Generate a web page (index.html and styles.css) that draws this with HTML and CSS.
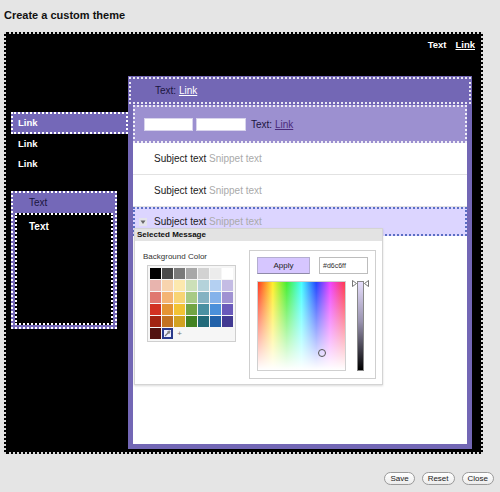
FILE: index.html
```html
<!DOCTYPE html>
<html>
<head>
<meta charset="utf-8">
<link rel="stylesheet" href="styles.css">
</head>
<body>
<div class="title">Create a custom theme</div>
<div class="canvas">
  <div class="topbar"><span>Text</span><a class="tlink">Link</a></div>
  <div class="main">
    <div class="nav">
      <div class="nav-item selected">Link</div>
      <div class="nav-item">Link</div>
      <div class="nav-item">Link</div>
      <div class="box">
        <div class="box-head">Text</div>
        <div class="box-body">Text</div>
      </div>
    </div>
    <div class="panel">
      <div class="phead">Text: <a class="hlink">Link</a></div>
      <div class="ptool"><span class="input"></span><span class="input wide"></span><span class="ptext">Text: <a class="plink">Link</a></span></div>
      <div class="list">
        <div class="row first"><span class="subj">Subject text</span>&nbsp;<span class="snip">Snippet text</span></div>
        <div class="row"><span class="subj">Subject text</span>&nbsp;<span class="snip">Snippet text</span></div>
        <div class="row selected">
          <svg class="drop" width="8" height="8" viewBox="0 0 8 8"><rect x="0" y="0" width="8" height="8" fill="#e4e4ea"/><path d="M1.5 2.5 L6.5 2.5 L4 6 Z" fill="#666"/></svg>
          <span class="subj">Subject text</span>&nbsp;<span class="snip">Snippet text</span>
        </div>
        <div class="popup">
          <div class="popup-head">Selected Message</div>
          <div class="popup-body">
            <div class="leftcol">
              <div class="label">Background Color</div>
              <div class="grid">
                <span class="sw" style="background:#000000"></span>
                <span class="sw" style="background:#4a4a4a"></span>
                <span class="sw" style="background:#7a7a7a"></span>
                <span class="sw" style="background:#a8a8a8"></span>
                <span class="sw" style="background:#d2d2d2"></span>
                <span class="sw" style="background:#ececec"></span>
                <span class="sw" style="background:#ffffff"></span>

                <span class="sw" style="background:#e8b4ae"></span>
                <span class="sw" style="background:#f8d4ae"></span>
                <span class="sw" style="background:#fce8ae"></span>
                <span class="sw" style="background:#cce0b8"></span>
                <span class="sw" style="background:#b4d2da"></span>
                <span class="sw" style="background:#b4d0f2"></span>
                <span class="sw" style="background:#c4bce4"></span>

                <span class="sw" style="background:#e07870"></span>
                <span class="sw" style="background:#f4b474"></span>
                <span class="sw" style="background:#f8d474"></span>
                <span class="sw" style="background:#a8ca84"></span>
                <span class="sw" style="background:#84b2c2"></span>
                <span class="sw" style="background:#84b2ea"></span>
                <span class="sw" style="background:#a092d2"></span>

                <span class="sw" style="background:#d23222"></span>
                <span class="sw" style="background:#e49434"></span>
                <span class="sw" style="background:#f2c234"></span>
                <span class="sw" style="background:#72a444"></span>
                <span class="sw" style="background:#4a90a2"></span>
                <span class="sw" style="background:#4a90da"></span>
                <span class="sw" style="background:#6a5aba"></span>

                <span class="sw" style="background:#a22412"></span>
                <span class="sw" style="background:#c27222"></span>
                <span class="sw" style="background:#d2a222"></span>
                <span class="sw" style="background:#428222"></span>
                <span class="sw" style="background:#226a7a"></span>
                <span class="sw" style="background:#2262aa"></span>
                <span class="sw" style="background:#423a92"></span>

                <span class="sw" style="background:#521210"></span>
                <span class="sw picked"><svg width="7" height="7" viewBox="0 0 7 7"><path d="M1 6 L4.5 2.5 M3.5 1.5 L5.5 3.5" stroke="#777" stroke-width="1.2" fill="none"/><circle cx="5.2" cy="1.8" r="1.2" fill="#888"/></svg></span>
                <span class="sw plus">+</span>
              </div>
            </div>
            <div class="picker">
              <div class="prow">
                <div class="apply">Apply</div>
                <div class="hex">#d6c6ff</div>
              </div>
              <div class="prow2">
                <div class="spectrum"><span class="marker"></span></div>
                <div class="slider">
                  <svg class="arrows" width="17" height="8" viewBox="0 0 17 8"><path d="M0.5 0.5 L4.5 3.5 L0.5 6.5 Z" fill="#fff" stroke="#555" stroke-width="0.8"/><path d="M16.5 0.5 L12.5 3.5 L16.5 6.5 Z" fill="#fff" stroke="#555" stroke-width="0.8"/></svg>
                </div>
              </div>
            </div>
          </div>
        </div>
      </div>
    </div>
  </div>
</div>
<div class="buttons">
  <span class="btn">Save</span>
  <span class="btn">Reset</span>
  <span class="btn">Close</span>
</div>
</body>
</html>
```

FILE: styles.css
```css
html, body {
  margin: 0;
  padding: 0;
}
body {
  background: #e5e5e5;
  font-family: "Liberation Sans", Arial, sans-serif;
  width: 500px;
  height: 492px;
  overflow: hidden;
}
.title {
  padding: 8px 0 0 4px;
  font-size: 11px;
  line-height: 14px;
  font-weight: bold;
  color: #111;
}
.canvas {
  margin: 10px 0 0 4px;
  width: 479px;
  height: 422px;
  box-sizing: border-box;
  border: 2px dotted #d8d8d8;
  background: #000;
  padding: 0 0 3px 5px;
  display: flex;
  flex-direction: column;
}
.topbar {
  height: 42px;
  box-sizing: border-box;
  display: flex;
  justify-content: flex-end;
  gap: 9px;
  padding: 5px 6px 0 0;
  font-size: 9.5px;
  line-height: 12px;
  font-weight: bold;
  color: #fff;
}
.tlink {
  text-decoration: underline;
}
.main {
  flex: 1;
  display: flex;
  margin-right: 9px;
}
.nav {
  width: 117px;
  padding-top: 36px;
  flex-shrink: 0;
  display: flex;
  flex-direction: column;
}
.nav-item {
  height: 20px;
  line-height: 20px;
  padding-left: 7px;
  font-size: 9.5px;
  font-weight: bold;
  color: #fff;
}
.nav-item.selected {
  height: 22px;
  line-height: 18px;
  box-sizing: border-box;
  border: 2px dotted #fff;
  background: #7468b8;
  padding-left: 5px;
}
.box {
  margin-top: 17px;
  width: 106px;
  height: 138px;
  box-sizing: border-box;
  border: 2px dotted #fff;
  background: #7468b8;
  padding: 0 2px 2px 2px;
  display: flex;
  flex-direction: column;
}
.box-head {
  height: 20px;
  line-height: 20px;
  padding-left: 14px;
  font-size: 10px;
  color: #1b1640;
}
.box-body {
  flex: 1;
  background: #000;
  border: 2px dotted #fff;
  padding: 6px 0 0 12px;
  font-size: 10px;
  line-height: 12px;
  font-weight: bold;
  color: #fff;
}
.panel {
  flex: 1;
  background: #7367b5;
  padding: 1px 5px 5px 5px;
  display: flex;
  flex-direction: column;
}
.phead {
  height: 27px;
  box-sizing: border-box;
  margin: 0 -4px 0 -4px;
  border: 2px dotted rgba(255,255,255,0.85);
  padding-left: 24px;
  font-size: 10px;
  line-height: 23px;
  color: #1b1640;
}
.hlink {
  color: #fff;
  text-decoration: underline;
}
.ptool {
  margin-top: 1px;
  height: 38px;
  box-sizing: border-box;
  background: #9c90d0;
  border: 2px dotted rgba(255,255,255,0.85);
  display: flex;
  align-items: center;
  padding-left: 9px;
  font-size: 10px;
  color: #1b1640;
}
.input {
  width: 49px;
  height: 13px;
  box-sizing: border-box;
  background: #fff;
  border: 1px solid #d8d4ec;
  margin-right: 3px;
}
.input.wide {
  width: 50px;
  margin-right: 5px;
}
.plink {
  color: #4b2a7b;
  text-decoration: underline;
}
.list {
  flex: 1;
  background: #fff;
  position: relative;
}
.row {
  height: 32px;
  box-sizing: border-box;
  border-bottom: 1px solid #e2e2e2;
  padding-left: 21px;
  display: flex;
  align-items: center;
  font-size: 10px;
  color: #222;
}
.snip {
  color: #aaa;
}
.row.selected {
  height: 29px;
  border: 2px dotted #5b6fc4;
  background: #dcd5ff;
  padding-left: 4px;
}
.drop {
  margin-right: 7px;
  flex-shrink: 0;
}
.popup {
  position: absolute;
  left: 1px;
  top: 85px;
  width: 249px;
  height: 157px;
  box-sizing: border-box;
  background: #fff;
  border: 1px solid #d4d4d4;
  box-shadow: 0 1px 2px rgba(0,0,0,0.15);
}
.popup-head {
  height: 12px;
  background: #e3e3e3;
  font-size: 8px;
  line-height: 12px;
  font-weight: bold;
  color: #111;
  padding-left: 2px;
}
.popup-body {
  display: flex;
  padding: 9px 0 0 8px;
}
.leftcol {
  padding-top: 2px;
}
.label {
  font-size: 8px;
  line-height: 10px;
  color: #333;
}
.grid {
  margin: 3px 0 0 4px;
  width: 89px;
  box-sizing: border-box;
  border: 1px solid #cfcfcf;
  padding: 2px;
  display: grid;
  grid-template-columns: repeat(7, 11px);
  grid-auto-rows: 11px;
  gap: 1px;
  background: #f6f6f6;
}
.sw {
  display: block;
}
.sw.picked {
  box-sizing: border-box;
  border: 2px solid #2b3a8c;
  background: #eef;
  display: flex;
  align-items: center;
  justify-content: center;
}
.sw.plus {
  font-size: 8px;
  line-height: 11px;
  text-align: center;
  color: #777;
}
.picker {
  margin-left: 13px;
  width: 127px;
  height: 129px;
  box-sizing: border-box;
  border: 1px solid #cfcfcf;
  padding: 6px 0 0 7px;
}
.prow {
  display: flex;
  gap: 9px;
}
.apply {
  width: 53px;
  height: 17px;
  box-sizing: border-box;
  background: #d6c6ff;
  border: 1px solid #b4aed0;
  border-bottom-color: #8f8aa8;
  font-size: 8px;
  line-height: 15px;
  text-align: center;
  color: #222;
}
.hex {
  width: 49px;
  height: 17px;
  box-sizing: border-box;
  border: 1px solid #bdbdbd;
  font-size: 7px;
  line-height: 15px;
  padding-left: 3px;
  color: #333;
}
.prow2 {
  display: flex;
  margin-top: 7px;
}
.spectrum {
  position: relative;
  width: 89px;
  height: 90px;
  box-sizing: border-box;
  border: 1px solid #d0d0d0;
  background:
    linear-gradient(to bottom, rgba(255,255,255,0) 0%, rgba(255,255,255,0.55) 55%, #fff 100%),
    linear-gradient(to right, #ff3a22 0%, #ffee2a 17%, #44ee33 33%, #44ffff 50%, #2244ff 67%, #ee44ff 83%, #ff3a4a 100%);
}
.marker {
  position: absolute;
  left: 60px;
  top: 67px;
  width: 6px;
  height: 6px;
  border: 1px solid #555;
  border-radius: 50%;
}
.slider {
  position: relative;
  margin-left: 11px;
  width: 7px;
  height: 90px;
  box-sizing: border-box;
  border: 1px solid #888;
  background: linear-gradient(to bottom, #e6defc 0%, #9a94b0 45%, #000 100%);
}
.arrows {
  position: absolute;
  left: -6px;
  top: -2px;
}
.buttons {
  margin-top: 18px;
  display: flex;
  justify-content: flex-end;
  gap: 7px;
  padding-right: 6px;
}
.btn {
  height: 13px;
  box-sizing: border-box;
  border: 1px solid #9a9a9a;
  border-radius: 7px;
  background: linear-gradient(#fff, #ececec);
  padding: 0 5px;
  font-size: 8px;
  line-height: 11px;
  color: #222;
}
```
